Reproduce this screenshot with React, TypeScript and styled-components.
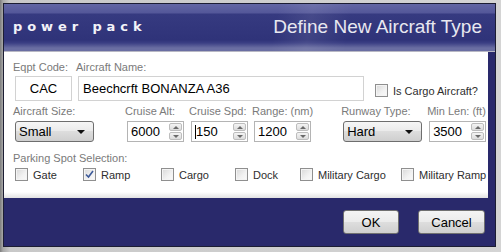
import React from 'react';
import styled, { createGlobalStyle } from 'styled-components';

const GlobalStyle = createGlobalStyle`
  html, body {
    margin: 0;
    padding: 0;
    background: #c4c4c4;
    font-family: "Liberation Sans", Arial, sans-serif;
  }
`;

const Backdrop = styled.div`
  width: 501px;
  height: 252px;
  padding: 3px 0 0 3px;
  box-sizing: border-box;
  background: linear-gradient(to right, #7d7d7d 0px, #a8a8a8 3px, #c8c8c8 10px, #d4d4d4 100%);
`;

const Dialog = styled.div`
  width: 493px;
  height: 244px;
  box-sizing: border-box;
  border: 1px solid #1c1d33;
  background: #29296b;
  display: flex;
  flex-direction: column;
`;

const Header = styled.div`
  height: 45px;
  flex: none;
  display: flex;
  align-items: center;
  justify-content: space-between;
  padding: 0 13px 2px 9px;
  background:
    linear-gradient(100deg, rgba(255,255,255,0) 55%, rgba(255,255,255,0.08) 62%, rgba(255,255,255,0) 70%),
    linear-gradient(to bottom, #6266a4 0px, #545799 9px, #363a80 10px, #2f3379 36px, #3b3f84 39px, #6a6ea2 44px);
  border-bottom: 1px solid #b8b8c4;
`;

const Brand = styled.div`
  color: #f2f2f8;
  font-family: "DejaVu Sans", sans-serif;
  font-weight: bold;
  font-size: 13px;
  letter-spacing: 4.9px;
`;

const Title = styled.div`
  color: #e8e8f0;
  font-family: "Liberation Sans", Arial, sans-serif;
  font-size: 19px;
`;

const Body = styled.div`
  height: 146px;
  flex: none;
  margin-right: 7px;
  box-sizing: border-box;
  background: linear-gradient(to bottom, #ffffff 0, #ffffff 140px, #e2e2e2 146px);
  padding: 8px 0 0 11px;
  display: flex;
  flex-direction: column;
`;

const Row = styled.div<{ $top?: number }>`
  display: flex;
  align-items: flex-end;
  margin-top: ${p => p.$top ?? 0}px;
`;

const Field = styled.div<{ $left?: number }>`
  display: flex;
  flex-direction: column;
  margin-left: ${p => p.$left ?? 0}px;
`;

const Label = styled.div`
  color: #7a7a7a;
  font-size: 11px;
  line-height: 14px;
  height: 14px;
  margin-left: -2px;
  white-space: nowrap;
`;

const TextBox = styled.div<{ $w: number; $center?: boolean }>`
  width: ${p => p.$w}px;
  height: 25px;
  box-sizing: border-box;
  border: 1px solid #d2d2d2;
  margin-top: 2px;
  font-size: 13px;
  color: #000;
  display: flex;
  align-items: center;
  justify-content: ${p => (p.$center ? 'center' : 'flex-start')};
  padding-left: ${p => (p.$center ? 0 : 4)}px;
`;

const CheckWrap = styled.label<{ $w?: number }>`
  display: flex;
  align-items: center;
  gap: 5px;
  width: ${p => (p.$w ? `${p.$w}px` : 'auto')};
  font-size: 11px;
  color: #2e2e2e;
  white-space: nowrap;
`;

const Box = styled.span`
  width: 13px;
  height: 13px;
  box-sizing: border-box;
  border: 1px solid #8f8f8f;
  background: linear-gradient(135deg, #d8d8d8 0%, #f2f2f2 60%, #fafafa 100%);
  box-shadow: inset 0 0 0 1px #f4f4f4;
  display: flex;
  align-items: center;
  justify-content: center;
`;

const SelectBox = styled.div`
  width: 79px;
  height: 21px;
  box-sizing: border-box;
  margin-top: 3px;
  border: 1px solid #6e6e6e;
  border-radius: 3px;
  background: linear-gradient(to bottom, #f6f6f6 0%, #ebebeb 45%, #dddddd 50%, #cfcfcf 100%);
  display: flex;
  align-items: center;
  justify-content: space-between;
  padding: 0 8px 0 3px;
  font-size: 13px;
  color: #000;
`;

const Arrow = styled.span`
  width: 0;
  height: 0;
  border-left: 4px solid transparent;
  border-right: 4px solid transparent;
  border-top: 4px solid #111;
`;

const SpinBox = styled.div`
  width: 57px;
  height: 21px;
  box-sizing: border-box;
  margin-top: 3px;
  border: 1px solid #b4b4b4;
  display: flex;
  align-items: stretch;
  font-size: 13px;
  color: #000;
`;

const SpinText = styled.div`
  flex: 1;
  display: flex;
  align-items: center;
  padding-left: 3px;
`;

const Caret = styled.span`
  width: 1px;
  height: 14px;
  background: #000;
`;

const SpinButtons = styled.div`
  width: 13px;
  margin: 1px 1px 1px 0;
  display: flex;
  flex-direction: column;
  gap: 1px;
`;

const SpinHalf = styled.div<{ $up?: boolean }>`
  flex: 1;
  box-sizing: border-box;
  border: 1px solid #bdbdbd;
  border-radius: 2px;
  background: linear-gradient(to bottom, #f4f4f4, #dcdcdc);
  display: flex;
  align-items: center;
  justify-content: center;
  &::after {
    content: '';
    width: 0;
    height: 0;
    border-left: 3px solid transparent;
    border-right: 3px solid transparent;
    ${p => (p.$up ? 'border-bottom: 3px solid #6a6a6a;' : 'border-top: 3px solid #6a6a6a;')}
  }
`;

const Footer = styled.div`
  flex: 1;
  display: flex;
  justify-content: flex-end;
  align-items: center;
  gap: 19px;
  padding: 0 10px 0 0;
`;

const Button = styled.button<{ $w: number }>`
  width: ${p => p.$w}px;
  height: 24px;
  border: 1px solid #707070;
  border-radius: 3px;
  background: linear-gradient(to bottom, #f4f4f4 0%, #ebebeb 48%, #dddddd 52%, #cfcfcf 100%);
  font-family: "Liberation Sans", Arial, sans-serif;
  font-size: 13px;
  color: #000;
  padding: 0;
`;

const Check: React.FC<{ label: string; checked?: boolean; w?: number }> = ({ label, checked, w }) => (
  <CheckWrap $w={w}>
    <Box>
      {checked && (
        <svg width="9" height="9" viewBox="0 0 9 9">
          <path d="M1 4.5 L3.5 7 L8 1" fill="none" stroke="#3d5a99" strokeWidth="1.6" />
        </svg>
      )}
    </Box>
    {label}
  </CheckWrap>
);

const Spin: React.FC<{ value: string; caret?: boolean }> = ({ value, caret }) => (
  <SpinBox>
    <SpinText>
      {caret && <Caret />}
      {value}
    </SpinText>
    <SpinButtons>
      <SpinHalf $up />
      <SpinHalf />
    </SpinButtons>
  </SpinBox>
);

const App: React.FC = () => (
  <>
    <GlobalStyle />
    <Backdrop>
      <Dialog>
        <Header>
          <Brand>power pack</Brand>
          <Title>Define New Aircraft Type</Title>
        </Header>
        <Body>
          <Row>
            <Field>
              <Label>Eqpt Code:</Label>
              <TextBox $w={57} $center>CAC</TextBox>
            </Field>
            <Field $left={6}>
              <Label>Aircraft Name:</Label>
              <TextBox $w={286}>Beechcrft BONANZA A36</TextBox>
            </Field>
            <Field $left={11}>
              <div style={{ height: 5 }} />
              <Check label="Is Cargo Aircraft?" />
              <div style={{ height: 4 }} />
            </Field>
          </Row>
          <Row $top={3}>
            <Field>
              <Label>Aircraft Size:</Label>
              <SelectBox>Small<Arrow /></SelectBox>
            </Field>
            <Field $left={33}>
              <Label>Cruise Alt:</Label>
              <Spin value="6000" />
            </Field>
            <Field $left={7}>
              <Label>Cruise Spd:</Label>
              <Spin value="150" caret />
            </Field>
            <Field $left={6}>
              <Label>Range: (nm)</Label>
              <Spin value="1200" />
            </Field>
            <Field $left={30}>
              <Label>Runway Type:</Label>
              <SelectBox>Hard<Arrow /></SelectBox>
            </Field>
            <Field $left={7}>
              <Label>Min Len: (ft)</Label>
              <Spin value="3500" />
            </Field>
          </Row>
          <Row $top={9}>
            <Label>Parking Spot Selection:</Label>
          </Row>
          <Row $top={3}>
            <Check label="Gate" w={68} />
            <Check label="Ramp" checked w={78} />
            <Check label="Cargo" w={74} />
            <Check label="Dock" w={65} />
            <Check label="Military Cargo" w={101} />
            <Check label="Military Ramp" />
          </Row>
        </Body>
        <Footer>
          <Button $w={56}>OK</Button>
          <Button $w={67}>Cancel</Button>
        </Footer>
      </Dialog>
    </Backdrop>
  </>
);

export default App;
